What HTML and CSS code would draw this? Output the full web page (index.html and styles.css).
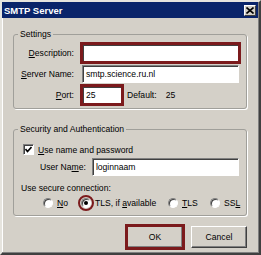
FILE: index.html
```html
<!DOCTYPE html>
<html lang="en">
<head>
    <meta charset="UTF-8">
    <title>SMTP Server</title>
    <link rel="stylesheet" href="styles.css">
</head>
<body>
    <div class="window">
        <div class="titlebar">
            <span class="title">SMTP Server</span>
            <span class="close-btn">
                <svg width="8" height="7" viewBox="0 0 8 7"><path d="M0.5 0.5 L7.5 6.5 M7.5 0.5 L0.5 6.5" stroke="#000" stroke-width="1.6"/></svg>
            </span>
        </div>

        <div class="content">
            <fieldset class="group">
                <legend>Settings</legend>
                <div class="settings-grid">
                    <label class="field-label"><u>D</u>escription:</label>
                    <div class="input highlight"></div>

                    <label class="field-label"><u>S</u>erver Name:</label>
                    <div class="input">smtp.science.ru.nl</div>

                    <label class="field-label"><u>P</u>ort:</label>
                    <div class="port-row">
                        <div class="input port-input highlight">25</div>
                        <span class="default-label">Default:</span>
                        <span class="default-value">25</span>
                    </div>
                </div>
            </fieldset>

            <fieldset class="group security">
                <legend>Security and Authentication</legend>
                <div class="check-row">
                    <span class="checkbox">
                        <svg width="7" height="7" viewBox="0 0 7 7"><path d="M0.5 3 L2.5 5.5 L6.5 1" fill="none" stroke="#000" stroke-width="1.6"/></svg>
                    </span>
                    <span><u>U</u>se name and password</span>
                </div>
                <div class="user-row">
                    <label class="user-label">User Na<u>m</u>e:</label>
                    <div class="input user-input">loginnaam</div>
                </div>
                <div class="secure-label">Use secure connection:</div>
                <div class="radio-row">
                    <div class="radio-item r-no"><span class="radio"></span><span><u>N</u>o</span></div>
                    <div class="radio-item r-tls-if"><span class="radio checked"></span><span>TLS, if <u>a</u>vailable</span></div>
                    <div class="radio-item r-tls"><span class="radio"></span><span><u>T</u>LS</span></div>
                    <div class="radio-item"><span class="radio"></span><span>SS<u>L</u></span></div>
                </div>
            </fieldset>

            <div class="buttons">
                <button class="btn btn-ok">OK</button>
                <button class="btn">Cancel</button>
            </div>
        </div>
    </div>
</body>
</html>
```

FILE: styles.css
```css
* {
    margin: 0;
    padding: 0;
    box-sizing: border-box;
}
body {
    font-family: 'Liberation Sans', Arial, sans-serif;
    font-size: 8.6px;
    color: #000;
    background-color: #d4d0c8;
}
.window {
    width: 261px;
    height: 255px;
    background-color: #d4d0c8;
    border: 2px solid;
    border-color: #e6e4de #404040 #404040 #e6e4de;
    box-shadow: inset -1px -1px 0 #808080, inset 1px 1px 0 #fff;
    overflow: hidden;
}
.titlebar {
    height: 16px;
    background-color: #0a246a;
    display: flex;
    justify-content: space-between;
    align-items: center;
    padding: 0 2px 0 2px;
    margin-right: 1px;
}
.title {
    color: #fff;
    font-weight: bold;
    font-size: 9.5px;
}
.close-btn {
    width: 12px;
    height: 11px;
    background-color: #d4d0c8;
    border: 1px solid;
    border-color: #fff #404040 #404040 #fff;
    display: flex;
    align-items: center;
    justify-content: center;
}
.content {
    padding: 11px 12px 0 11px;
}
.group {
    border: 1px solid #a09f9a;
    border-radius: 3px;
    box-shadow: 1px 1px 0 #fff;
    padding: 0 0 4px 0;
    min-width: 0;
}
.group legend {
    margin-left: 4px;
    padding: 0 2px;
    line-height: 10px;
}
.settings-grid {
    display: grid;
    grid-template-columns: 60px 157px;
    column-gap: 8px;
    row-gap: 3px;
    align-items: center;
    padding-top: 5px;
}
.field-label {
    text-align: right;
}
.input {
    height: 18px;
    background-color: #fff;
    border: 1px solid;
    border-color: #808080 #fff #fff #808080;
    box-shadow: inset 1px 1px 0 #404040;
    padding: 0 3px;
    line-height: 16px;
    white-space: nowrap;
}
.highlight {
    outline: 3px solid #7b1a1c;
    outline-offset: -1px;
}
.port-row {
    display: flex;
    align-items: center;
}
.port-input {
    width: 40px;
}
.default-label {
    margin-left: 5px;
}
.default-value {
    margin-left: 9px;
}
.security {
    margin-top: 15px;
    padding-bottom: 7px;
}
.check-row {
    display: flex;
    align-items: center;
    gap: 4px;
    padding: 10px 0 0 9px;
}
.checkbox {
    width: 11px;
    height: 11px;
    background-color: #fff;
    border: 1px solid;
    border-color: #808080 #fff #fff #808080;
    box-shadow: inset 1px 1px 0 #404040;
    display: flex;
    align-items: center;
    justify-content: center;
}
.user-row {
    display: flex;
    align-items: center;
    gap: 6px;
    padding: 3px 0 0 26px;
}
.user-input {
    width: 147px;
}
.secure-label {
    padding: 7px 0 0 7px;
    line-height: 10px;
}
.radio-row {
    display: flex;
    align-items: center;
    padding: 5px 0 0 29px;
}
.radio-item {
    display: flex;
    align-items: center;
    gap: 4px;
}
.r-no {
    width: 38px;
}
.r-tls-if {
    width: 87px;
}
.r-tls {
    width: 42px;
}
.radio {
    width: 10px;
    height: 10px;
    border-radius: 50%;
    background-color: #fff;
    border: 1px solid;
    border-color: #808080 #fff #fff #808080;
    box-shadow: inset 1px 1px 0 #404040;
    display: flex;
    align-items: center;
    justify-content: center;
}
.radio.checked {
    outline: 2px solid #7b1a1c;
    outline-offset: 1px;
}
.radio.checked::after {
    content: "";
    width: 4px;
    height: 4px;
    border-radius: 50%;
    background-color: #000;
}
.buttons {
    display: flex;
    justify-content: flex-end;
    gap: 8px;
    margin-top: 10px;
}
.btn {
    width: 56px;
    height: 22px;
    font-family: inherit;
    font-size: 8.6px;
    background-color: #d4d0c8;
    border: 1px solid;
    border-color: #fff #404040 #404040 #fff;
    box-shadow: inset -1px -1px 0 #808080;
}
.btn-ok {
    outline: 3px solid #7b1a1c;
    outline-offset: -1px;
}
```
